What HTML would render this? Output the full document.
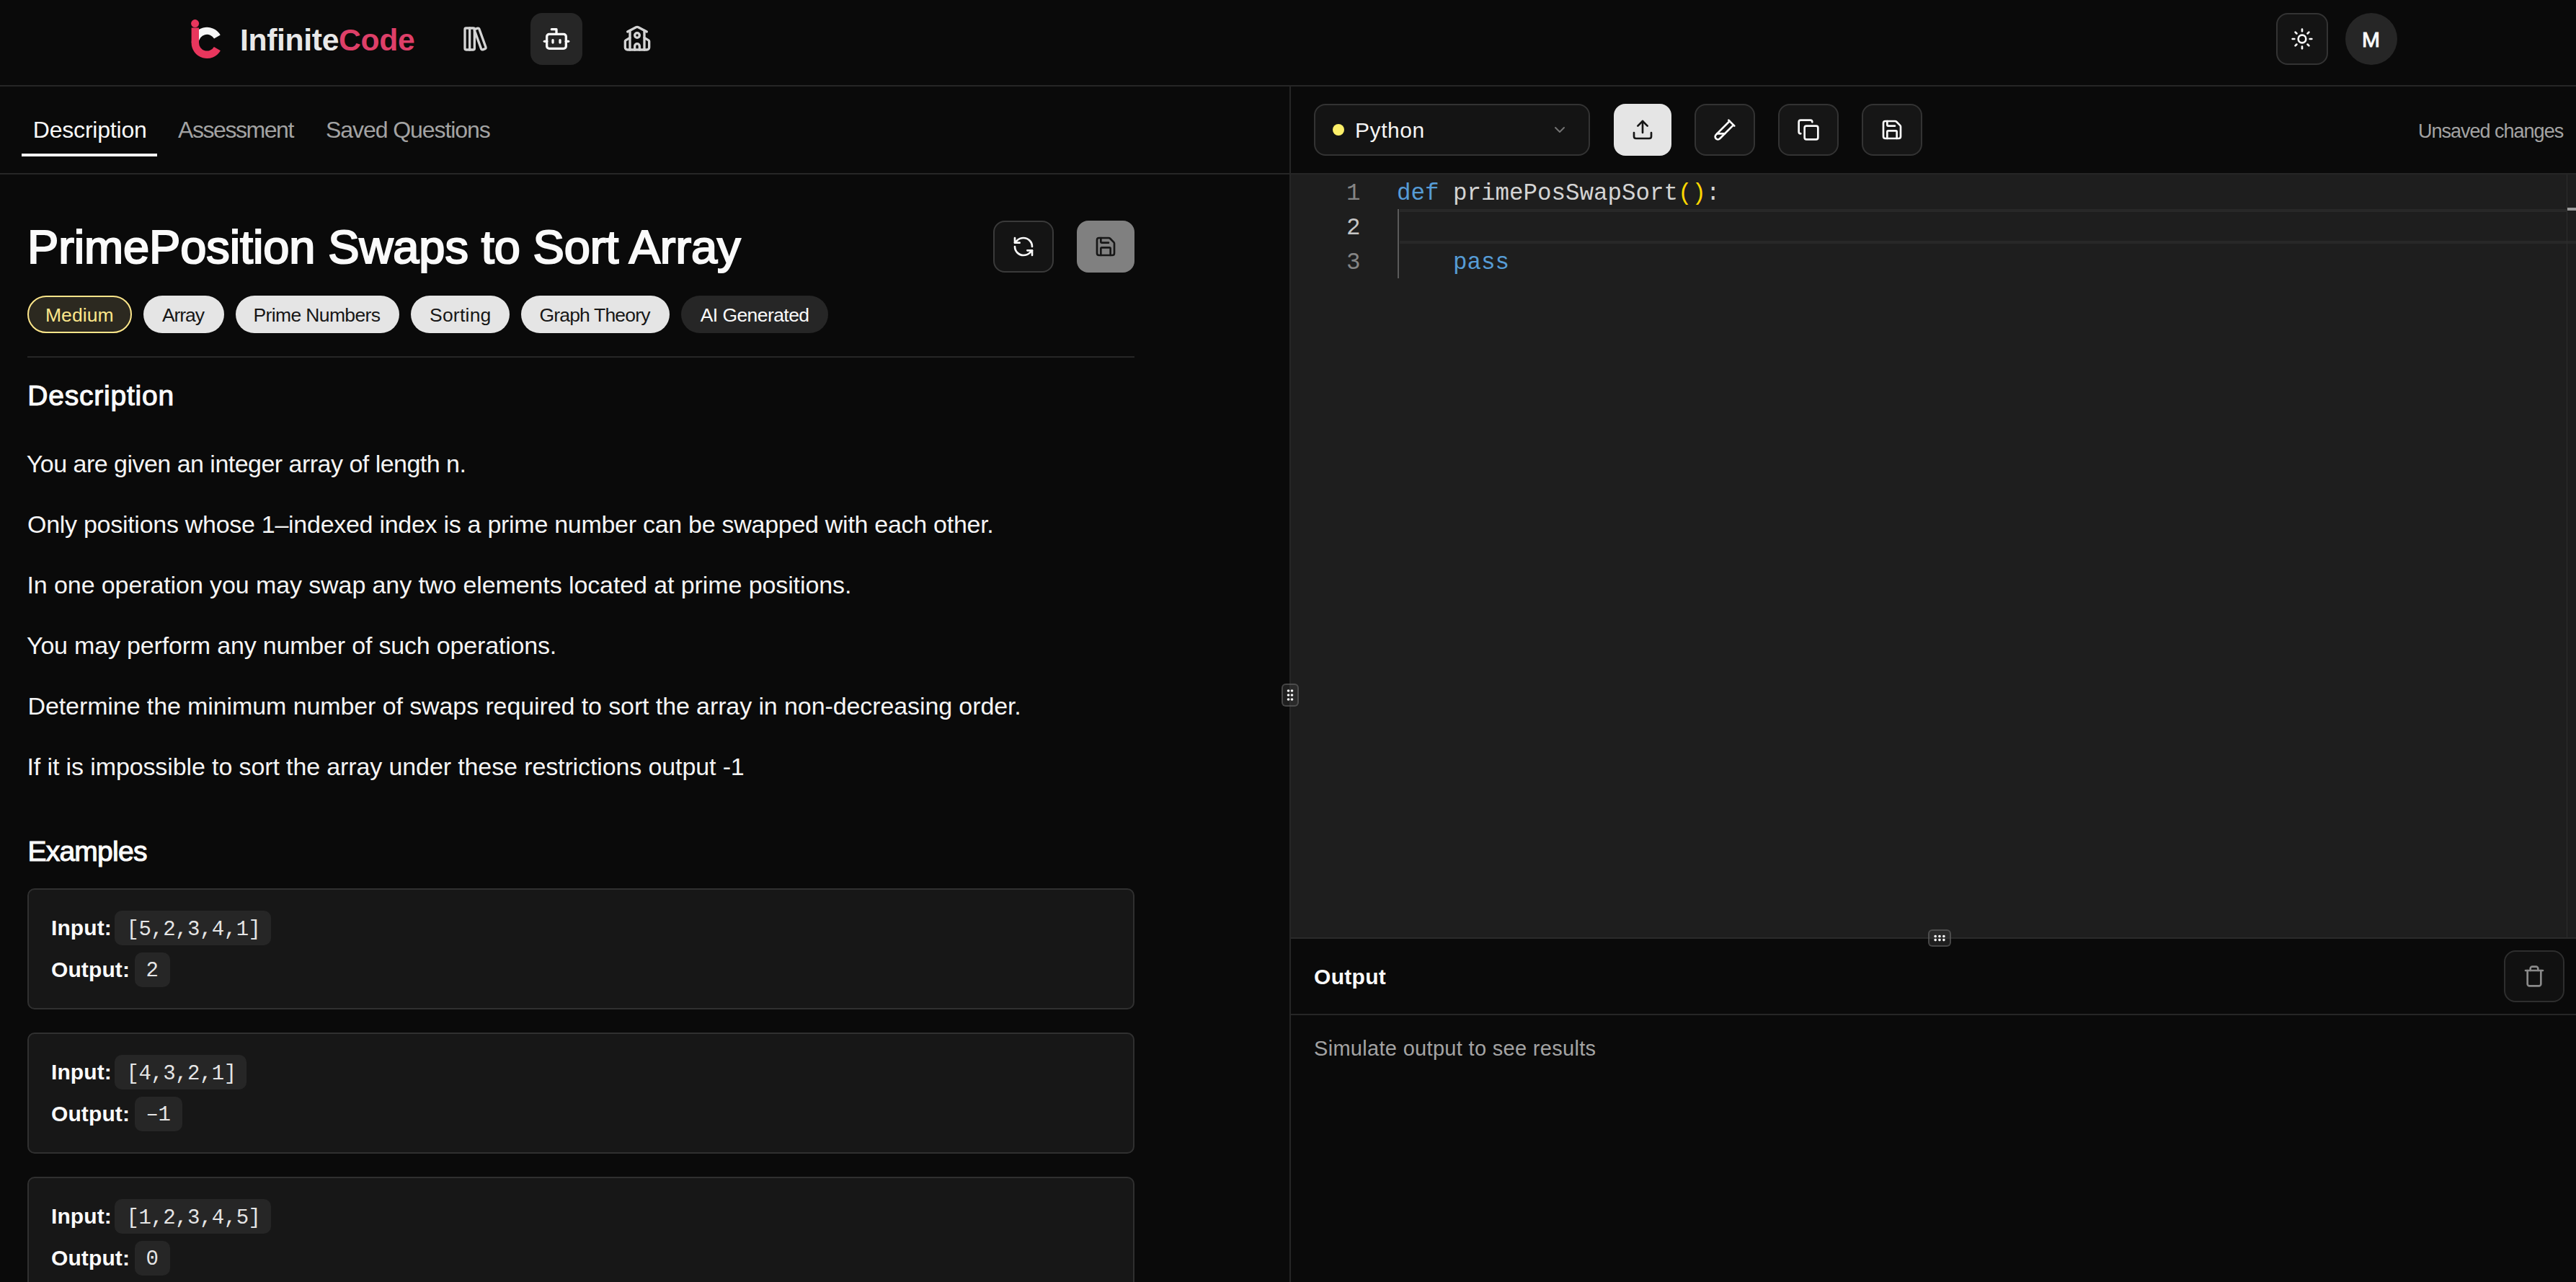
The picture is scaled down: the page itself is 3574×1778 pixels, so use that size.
<!DOCTYPE html>
<html><head><meta charset="utf-8">
<style>
*{box-sizing:border-box;margin:0;padding:0}
html,body{width:3574px;height:1778px;overflow:hidden;background:#0a0a0a}
body{position:relative;font-family:"Liberation Sans",sans-serif;color:#fafafa}
.a{position:absolute}
.t{position:absolute;white-space:pre;line-height:1}
.mono{font-family:"Liberation Mono",monospace}
svg{position:absolute;overflow:visible}
.ic{fill:none;stroke-linecap:round;stroke-linejoin:round}
.ob{position:absolute;border:2px solid #333;background:#161616;border-radius:16px}
.tag{position:absolute;top:410px;height:52px;border-radius:26px;background:#e5e5e5}
.card{position:absolute;left:38px;width:1536px;height:168px;border:2px solid #303030;background:#171717;border-radius:10px}
.pill{position:absolute;height:48px;background:#262626;border-radius:10px}
.lbl{font-size:30px;font-weight:700;letter-spacing:0.1px;color:#fafafa}
.code{font-size:29px;letter-spacing:-0.5px;color:#e5e5e5}
.p{font-size:34px;color:#f5f5f5;left:38px}
</style></head>
<body>
<!-- ================= HEADER ================= -->
<div class="a" style="left:0;top:118px;width:3574px;height:2px;background:#262626"></div>
<svg style="left:0;top:0" width="400" height="110" viewBox="0 0 400 110">
  <path d="M270.8 59.2 A16.4 16.4 0 0 1 301.4 51" fill="none" stroke="#f5f5f5" stroke-width="10"/>
  <path d="M270.8 38.6 V59.2 A16.4 16.4 0 0 0 301.4 67.6" fill="none" stroke="#e8365d" stroke-width="10.4"/>
  <circle cx="270.6" cy="32.6" r="5.5" fill="#e8365d"/>
</svg>
<div class="t" style="left:333px;top:33.5px;font-size:42.7px;font-weight:700;letter-spacing:-0.36px;color:#e8e8e8">Infinite<span style="color:#de3f68">Code</span></div>

<!-- library-big -->
<svg style="left:640px;top:34px" width="40" height="40" viewBox="0 0 24 24" class="ic" stroke="#d4d4d4" stroke-width="2">
  <rect width="8" height="18" x="3" y="3" rx="1"/><path d="M7 3v18"/><path d="M20.4 18.9c.2.5-.1 1.1-.6 1.3l-1.9.7c-.5.2-1.1-.1-1.3-.6L11.1 5.1c-.2-.5.1-1.1.6-1.3l1.9-.7c.5-.2 1.1.1 1.3.6Z"/>
</svg>
<div class="a" style="left:736px;top:18px;width:72px;height:72px;background:#262626;border-radius:16px"></div>
<!-- bot -->
<svg style="left:752px;top:34px" width="40" height="40" viewBox="0 0 24 24" class="ic" stroke="#fafafa" stroke-width="2">
  <path d="M12 8V4H8"/><rect width="16" height="12" x="4" y="8" rx="2"/><path d="M2 14h2"/><path d="M20 14h2"/><path d="M15 13v2"/><path d="M9 13v2"/>
</svg>
<!-- school -->
<svg style="left:864px;top:34px" width="40" height="40" viewBox="0 0 24 24" class="ic" stroke="#d4d4d4" stroke-width="2">
  <path d="M14 21v-3a2 2 0 0 0-4 0v3"/><path d="M18 5v16"/><path d="m4 6 7.106-3.79a2 2 0 0 1 1.788 0L20 6"/><path d="m6 11-3.52 2.147a1 1 0 0 0-.48.854V19a2 2 0 0 0 2 2h16a2 2 0 0 0 2-2v-5a1 1 0 0 0-.48-.853L18 11"/><path d="M6 5v16"/><circle cx="12" cy="9" r="2"/>
</svg>

<!-- theme + avatar -->
<div class="ob" style="left:3158px;top:18px;width:72px;height:72px;background:#141414"></div>
<svg style="left:3178px;top:38px" width="32" height="32" viewBox="0 0 24 24" class="ic" stroke="#fafafa" stroke-width="2">
  <circle cx="12" cy="12" r="4"/><path d="M12 2v2"/><path d="M12 20v2"/><path d="m4.93 4.93 1.41 1.41"/><path d="m17.66 17.66 1.41 1.41"/><path d="M2 12h2"/><path d="M20 12h2"/><path d="m6.34 17.66-1.41 1.41"/><path d="m19.07 4.93-1.41 1.41"/>
</svg>
<div class="a" style="left:3254px;top:18px;width:72px;height:72px;background:#262626;border-radius:50%"></div>
<div class="t" style="left:3277px;top:39.6px;font-size:30px;color:#fafafa;-webkit-text-stroke:1px #fafafa">M</div>

<!-- ================= LEFT PANEL ================= -->
<div class="a" style="left:0;top:240px;width:1789px;height:2px;background:#262626"></div>
<div class="t" style="left:45.8px;top:164.3px;font-size:32px;letter-spacing:-0.2px;color:#fafafa">Description</div>
<div class="a" style="left:30px;top:213px;width:188px;height:4px;background:#fafafa"></div>
<div class="t" style="left:247px;top:164.3px;font-size:32px;letter-spacing:-1.44px;color:#a3a3a3">Assessment</div>
<div class="t" style="left:452px;top:164.3px;font-size:32px;letter-spacing:-1.07px;color:#a3a3a3">Saved Questions</div>

<div class="t" style="left:38px;top:309.5px;font-size:65px;letter-spacing:-0.125px;color:#fafafa;-webkit-text-stroke:2.2px #fafafa">PrimePosition Swaps to Sort Array</div>
<div class="ob" style="left:1378px;top:306px;width:84px;height:72px;border-color:#3a3a3a;background:#141414"></div>
<svg style="left:1404px;top:326px" width="32" height="32" viewBox="0 0 24 24" class="ic" stroke="#fafafa" stroke-width="2">
  <path d="M21 12a9 9 0 0 0-9-9 9.75 9.75 0 0 0-6.74 2.74L3 8"/><path d="M3 3v5h5"/><path d="M3 12a9 9 0 0 0 9 9 9.75 9.75 0 0 0 6.74-2.74L21 16"/><path d="M16 16h5v5"/>
</svg>
<div class="a" style="left:1494px;top:306px;width:80px;height:72px;background:#808080;border-radius:16px"></div>
<svg style="left:1518px;top:326px" width="32" height="32" viewBox="0 0 24 24" class="ic" stroke="#171717" stroke-width="2">
  <path d="M15.2 3a2 2 0 0 1 1.4.6l3.8 3.8a2 2 0 0 1 .6 1.4V19a2 2 0 0 1-2 2H5a2 2 0 0 1-2-2V5a2 2 0 0 1 2-2z"/><path d="M17 21v-7a1 1 0 0 0-1-1H8a1 1 0 0 0-1 1v7"/><path d="M7 3v4a1 1 0 0 0 1 1h7"/>
</svg>

<!-- tags -->
<div class="tag" style="left:38px;width:145px;background:#2c2920;border:2px solid #fde68a"></div>
<div class="t" style="left:62.9px;top:423.8px;font-size:26.5px;letter-spacing:0.1px;color:#fde68a">Medium</div>
<div class="tag" style="left:199px;width:112px"></div>
<div class="t" style="left:225px;top:423.8px;font-size:26.5px;color:#171717;letter-spacing:-1.08px">Array</div>
<div class="tag" style="left:327px;width:227px"></div>
<div class="t" style="left:351.5px;top:423.8px;font-size:26.5px;color:#171717;letter-spacing:-0.63px">Prime Numbers</div>
<div class="tag" style="left:570px;width:137px"></div>
<div class="t" style="left:596px;top:423.8px;font-size:26.5px;color:#171717;letter-spacing:0.23px">Sorting</div>
<div class="tag" style="left:723px;width:206px"></div>
<div class="t" style="left:748.5px;top:423.8px;font-size:26.5px;color:#171717;letter-spacing:-0.83px">Graph Theory</div>
<div class="tag" style="left:945px;width:204px;background:#262626"></div>
<div class="t" style="left:971.7px;top:423.8px;font-size:26.5px;color:#fafafa;letter-spacing:-0.57px">AI Generated</div>

<div class="a" style="left:38px;top:494px;width:1536px;height:2px;background:#262626"></div>

<div class="t" style="left:38.3px;top:528.5px;font-size:39px;letter-spacing:0.77px;color:#fafafa;-webkit-text-stroke:1.1px #fafafa">Description</div>
<div class="t p" style="left:36.8px;top:626.1px;letter-spacing:-0.52px">You are given an integer array of length n.</div>
<div class="t p" style="left:38px;top:710.1px;letter-spacing:-0.28px">Only positions whose 1–indexed index is a prime number can be swapped with each other.</div>
<div class="t p" style="left:37.5px;top:794.1px;letter-spacing:-0.097px">In one operation you may swap any two elements located at prime positions.</div>
<div class="t p" style="left:37px;top:878px;letter-spacing:-0.18px">You may perform any number of such operations.</div>
<div class="t p" style="left:38.5px;top:962px;letter-spacing:-0.1px">Determine the minimum number of swaps required to sort the array in non-decreasing order.</div>
<div class="t p" style="left:37.5px;top:1046px;letter-spacing:-0.115px">If it is impossible to sort the array under these restrictions output -1</div>

<div class="t" style="left:38.4px;top:1161px;font-size:39px;letter-spacing:-0.75px;color:#fafafa;-webkit-text-stroke:1.1px #fafafa">Examples</div>

<!-- card 1 -->
<div class="card" style="top:1232px"></div>
<div class="t lbl" style="left:71px;top:1272.2px">Input:</div>
<div class="pill" style="left:159px;top:1263px;width:217px"></div>
<div class="t mono code" style="left:175.5px;top:1275.1px">[5,2,3,4,1]</div>
<div class="t lbl" style="left:71px;top:1329.6px">Output:</div>
<div class="pill" style="left:187px;top:1321px;width:49px"></div>
<div class="t mono code" style="left:202.5px;top:1332px">2</div>
<!-- card 2 -->
<div class="card" style="top:1432px"></div>
<div class="t lbl" style="left:71px;top:1472.2px">Input:</div>
<div class="pill" style="left:159px;top:1463px;width:183px"></div>
<div class="t mono code" style="left:175.5px;top:1475.1px">[4,3,2,1]</div>
<div class="t lbl" style="left:71px;top:1529.6px">Output:</div>
<div class="pill" style="left:187px;top:1521px;width:66px"></div>
<div class="t mono code" style="left:202.5px;top:1532px">–1</div>
<!-- card 3 -->
<div class="card" style="top:1632px"></div>
<div class="t lbl" style="left:71px;top:1672.2px">Input:</div>
<div class="pill" style="left:159px;top:1663px;width:217px"></div>
<div class="t mono code" style="left:175.5px;top:1675.1px">[1,2,3,4,5]</div>
<div class="t lbl" style="left:71px;top:1729.6px">Output:</div>
<div class="pill" style="left:187px;top:1721px;width:49px"></div>
<div class="t mono code" style="left:202.5px;top:1732px">0</div>

<!-- ================= RIGHT PANEL ================= -->
<div class="a" style="left:1789px;top:120px;width:2px;height:1658px;background:#262626"></div>
<div class="a" style="left:1791px;top:240px;width:1783px;height:2px;background:#262626"></div>

<div class="ob" style="left:1823px;top:144px;width:383px;height:72px;background:#141414"></div>
<div class="a" style="left:1849px;top:172px;width:16px;height:16px;border-radius:50%;background:#fcef69"></div>
<div class="t" style="left:1880px;top:166px;font-size:30px;letter-spacing:0.56px;color:#f5f5f5">Python</div>
<svg style="left:2152px;top:168px" width="24" height="24" viewBox="0 0 24 24" class="ic" stroke="#737373" stroke-width="2"><path d="m6 9 6 6 6-6"/></svg>

<div class="a" style="left:2239px;top:144px;width:80px;height:72px;background:#e5e5e5;border-radius:16px"></div>
<svg style="left:2263px;top:164px" width="32" height="32" viewBox="0 0 24 24" class="ic" stroke="#171717" stroke-width="2">
  <path d="M21 15v4a2 2 0 0 1-2 2H5a2 2 0 0 1-2-2v-4"/><polyline points="17 8 12 3 7 8"/><line x1="12" x2="12" y1="3" y2="15"/>
</svg>
<div class="ob" style="left:2351px;top:144px;width:84px;height:72px"></div>
<svg style="left:2377px;top:164px" width="32" height="32" viewBox="0 0 24 24" class="ic" stroke="#fafafa" stroke-width="2">
  <path d="M21 7 6.82 21.18a2.83 2.83 0 0 1-3.99-.01a2.83 2.83 0 0 1 0-4L17 3"/><path d="m16 2 6 6"/><path d="M12 16H4"/>
</svg>
<div class="ob" style="left:2467px;top:144px;width:84px;height:72px"></div>
<svg style="left:2493px;top:164px" width="32" height="32" viewBox="0 0 24 24" class="ic" stroke="#fafafa" stroke-width="2">
  <rect width="14" height="14" x="8" y="8" rx="2" ry="2"/><path d="M4 16c-1.1 0-2-.9-2-2V4c0-1.1.9-2 2-2h10c1.1 0 2 .9 2 2"/>
</svg>
<div class="ob" style="left:2583px;top:144px;width:84px;height:72px"></div>
<svg style="left:2609px;top:164px" width="32" height="32" viewBox="0 0 24 24" class="ic" stroke="#fafafa" stroke-width="2">
  <path d="M15.2 3a2 2 0 0 1 1.4.6l3.8 3.8a2 2 0 0 1 .6 1.4V19a2 2 0 0 1-2 2H5a2 2 0 0 1-2-2V5a2 2 0 0 1 2-2z"/><path d="M17 21v-7a1 1 0 0 0-1-1H8a1 1 0 0 0-1 1v7"/><path d="M7 3v4a1 1 0 0 0 1 1h7"/>
</svg>
<div class="t" style="left:3355px;top:168.5px;font-size:27px;letter-spacing:-1px;color:#a3a3a3">Unsaved changes</div>

<!-- editor -->
<div class="a" style="left:1791px;top:242px;width:1783px;height:1058px;background:#1e1e1e"></div>
<div class="a" style="left:1942px;top:290px;width:1620px;height:4px;background:#282828"></div>
<div class="a" style="left:1942px;top:334px;width:1632px;height:4px;background:#282828"></div>
<div class="a" style="left:1939px;top:290px;width:2px;height:96px;background:#5a5a5a"></div>
<div class="a" style="left:3561px;top:242px;width:1px;height:1058px;background:#2c2c2c"></div>
<div class="a" style="left:3562px;top:288px;width:12px;height:4px;background:#9a9a9a"></div>
<div class="t mono" style="left:1868px;top:253px;font-size:32.5px;color:#858585">1</div>
<div class="t mono" style="left:1868px;top:301px;font-size:32.5px;color:#c6c6c6">2</div>
<div class="t mono" style="left:1868px;top:349px;font-size:32.5px;color:#858585">3</div>
<div class="t mono" style="left:1938px;top:253px;font-size:32.5px;color:#d4d4d4"><span style="color:#569cd6">def</span> primePosSwapSort<span style="color:#ffd700">()</span>:</div>
<div class="t mono" style="left:1938px;top:349px;font-size:32.5px;color:#569cd6">    pass</div>

<!-- output -->
<div class="a" style="left:1791px;top:1300px;width:1783px;height:2px;background:#2a2a2a"></div>
<div class="t" style="left:1823px;top:1340px;font-size:30px;font-weight:700;letter-spacing:0.3px;color:#fafafa">Output</div>
<div class="ob" style="left:3474px;top:1318px;width:84px;height:72px;border-color:#2e2e2e;background:#111"></div>
<svg style="left:3500px;top:1338px" width="32" height="32" viewBox="0 0 24 24" class="ic" stroke="#8a8a8a" stroke-width="2">
  <path d="M3 6h18"/><path d="M19 6v14c0 1-1 2-2 2H7c-1 0-2-1-2-2V6"/><path d="M8 6V4c0-1 1-2 2-2h4c1 0 2 1 2 2v2"/>
</svg>
<div class="a" style="left:1791px;top:1406px;width:1783px;height:2px;background:#262626"></div>
<div class="t" style="left:1823px;top:1439.8px;font-size:29px;letter-spacing:0.31px;color:#a3a3a3">Simulate output to see results</div>

<!-- resize handles -->
<div class="a" style="left:1778px;top:948px;width:24px;height:32px;border:2px solid rgba(110,110,110,.5);background:rgba(60,60,60,.4);border-radius:6px"></div>
<div class="a" style="left:2675px;top:1289px;width:32px;height:24px;border:2px solid rgba(110,110,110,.5);background:rgba(60,60,60,.4);border-radius:6px"></div>
<svg style="left:0;top:0" width="1" height="1">
  <g fill="#fafafa">
    <circle cx="1787.5" cy="958" r="1.8"/><circle cx="1792.5" cy="958" r="1.8"/>
    <circle cx="1787.5" cy="964" r="1.8"/><circle cx="1792.5" cy="964" r="1.8"/>
    <circle cx="1787.5" cy="970" r="1.8"/><circle cx="1792.5" cy="970" r="1.8"/>
    <circle cx="2685.2" cy="1298.5" r="1.8"/><circle cx="2691" cy="1298.5" r="1.8"/><circle cx="2696.9" cy="1298.5" r="1.8"/>
    <circle cx="2685.2" cy="1303.6" r="1.8"/><circle cx="2691" cy="1303.6" r="1.8"/><circle cx="2696.9" cy="1303.6" r="1.8"/>
  </g>
</svg>
</body></html>
